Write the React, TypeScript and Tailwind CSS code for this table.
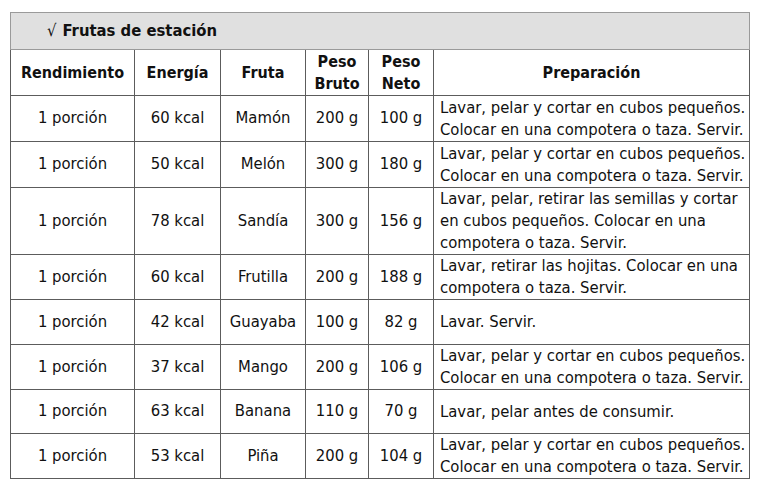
const rows = [
  { rend: "1 porción", kcal: "60 kcal", fruta: "Mamón", bruto: "200 g", neto: "100 g", prep: ["Lavar, pelar y cortar en cubos pequeños.", "Colocar en una compotera o taza. Servir."], h: "h-[46px]" },
  { rend: "1 porción", kcal: "50 kcal", fruta: "Melón", bruto: "300 g", neto: "180 g", prep: ["Lavar, pelar y cortar en cubos pequeños.", "Colocar en una compotera o taza. Servir."], h: "h-[46px]" },
  { rend: "1 porción", kcal: "78 kcal", fruta: "Sandía", bruto: "300 g", neto: "156 g", prep: ["Lavar, pelar, retirar las semillas y cortar", "en cubos pequeños. Colocar en una", "compotera o taza. Servir."], h: "h-[66px]" },
  { rend: "1 porción", kcal: "60 kcal", fruta: "Frutilla", bruto: "200 g", neto: "188 g", prep: ["Lavar, retirar las hojitas. Colocar en una", "compotera o taza. Servir."], h: "h-[45px]" },
  { rend: "1 porción", kcal: "42 kcal", fruta: "Guayaba", bruto: "100 g", neto: "82 g", prep: ["Lavar. Servir."], h: "h-[45px]" },
  { rend: "1 porción", kcal: "37 kcal", fruta: "Mango", bruto: "200 g", neto: "106 g", prep: ["Lavar, pelar y cortar en cubos pequeños.", "Colocar en una compotera o taza. Servir."], h: "h-[45px]" },
  { rend: "1 porción", kcal: "63 kcal", fruta: "Banana", bruto: "110 g", neto: "70 g", prep: ["Lavar, pelar antes de consumir."], h: "h-[44px]" },
  { rend: "1 porción", kcal: "53 kcal", fruta: "Piña", bruto: "200 g", neto: "104 g", prep: ["Lavar, pelar y cortar en cubos pequeños.", "Colocar en una compotera o taza. Servir."], h: "h-[45px]" },
];

const cell = "border border-[#5c5c5c] text-center align-middle p-0";

export default function App() {
  return (
    <div className="w-[770px] h-[495px] bg-white pt-[12px] pl-[10px] font-['DejaVu_Sans_Condensed','Liberation_Sans',sans-serif] text-[#111] text-[16.5px]">
      <table className="border-collapse w-[739px] table-fixed">
        <colgroup>
          <col className="w-[124px]" />
          <col className="w-[86px]" />
          <col className="w-[85px]" />
          <col className="w-[63px]" />
          <col className="w-[65px]" />
          <col className="w-[316px]" />
        </colgroup>
        <tbody>
          <tr className="h-[37px] bg-[#e0e0e0]">
            <td colSpan={6} className="border border-[#9a9a9a] pl-[36px] text-[16.5px] font-bold text-left align-middle">
              <span className="font-normal mr-[6px]">√</span>Frutas de estación
            </td>
          </tr>
          <tr className="h-[46px] font-bold text-[16px]">
            <td className={cell}>Rendimiento</td>
            <td className={cell}>Energía</td>
            <td className={cell}>Fruta</td>
            <td className={`${cell} leading-[22px]`}>Peso<br />Bruto</td>
            <td className={`${cell} leading-[22px]`}>Peso<br />Neto</td>
            <td className={cell}>Preparación</td>
          </tr>
          {rows.map((r, i) => (
            <tr key={i} className={r.h}>
              <td className={cell}>{r.rend}</td>
              <td className={cell}>{r.kcal}</td>
              <td className={cell}>{r.fruta}</td>
              <td className={cell}>{r.bruto}</td>
              <td className={cell}>{r.neto}</td>
              <td className="border border-[#5c5c5c] text-left align-middle pl-[6px] leading-[22px] whitespace-nowrap">
                {r.prep.map((l, j) => (
                  <div key={j}>{l}</div>
                ))}
              </td>
            </tr>
          ))}
        </tbody>
      </table>
    </div>
  );
}
